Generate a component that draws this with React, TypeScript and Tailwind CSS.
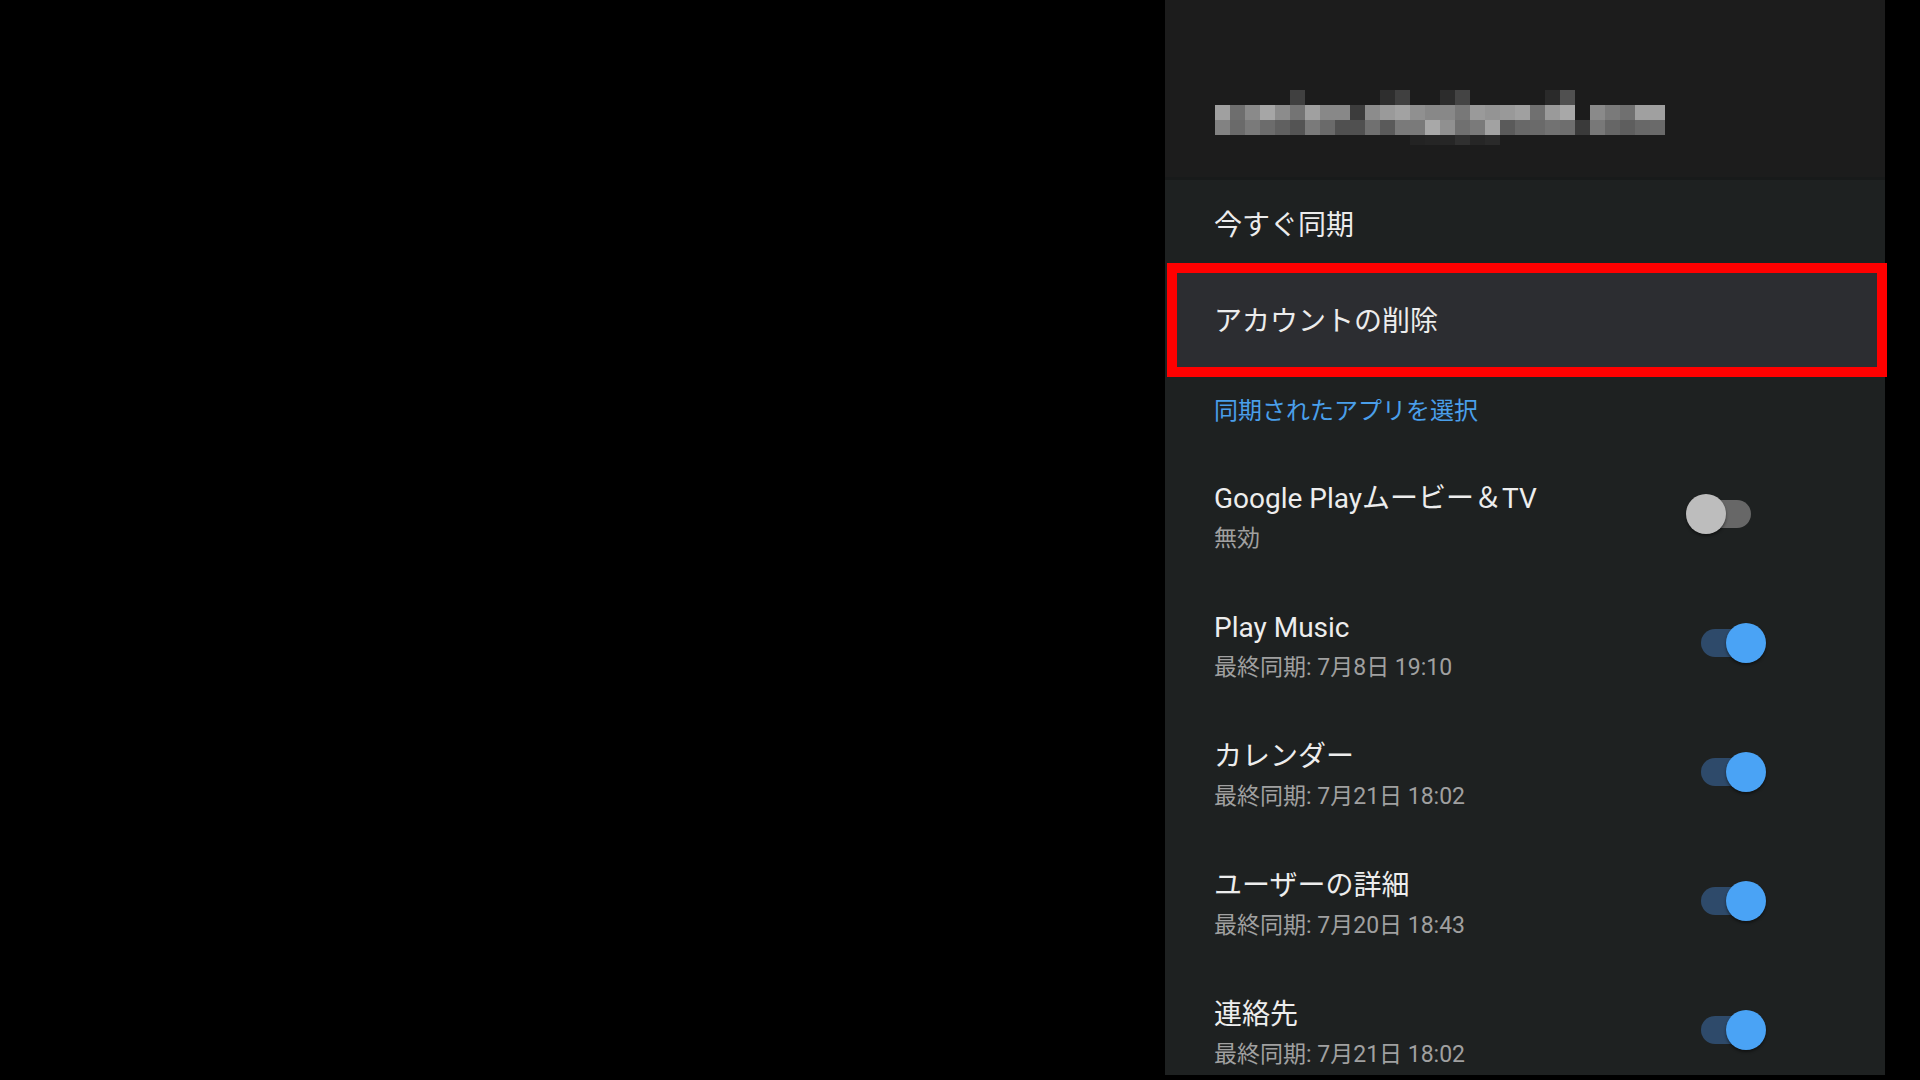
import React from 'react';

// mosaic of the blurred account address
const rowA = ['a0', '6e', '8a', 'a6', '8c', '74', 'a0', '88', '88', '3c', '8c', '9a', 'a2', '90', '88', '88', '78', '9a', '94', '99', 'a0', '70', '9a', 'a8', '1c', '8a', '7a', '70', 'a0', 'a0'];
const rowB = ['82', '6a', '7a', '6c', '60', '54', '7a', '6a', '50', '50', '70', '5a', '7a', '7a', 'a8', '90', '70', '7a', 'a2', '5a', '68', '6a', '72', '6e', '3a', '78', '66', '5e', '68', '6a'];
const topBits: [number, string][] = [[5, '40'], [11, '2e'], [12, '40'], [15, '2c'], [16, '44'], [22, '2a'], [23, '50']];
const bottomBits: [number, string][] = [[13, '23'], [14, '25'], [15, '26'], [16, '30'], [17, '26'], [18, '2a']];

const Mosaic = () => (
  <svg width="450" height="55" viewBox="0 0 450 55" shapeRendering="crispEdges">
    {topBits.map(([i, c]) => (
      <rect key={'t' + i} x={i * 15} y={0} width={15} height={15} fill={`#${c}${c}${c}`} />
    ))}
    {rowA.map((c, i) => (
      <rect key={'a' + i} x={i * 15} y={15} width={15} height={15} fill={`#${c}${c}${c}`} />
    ))}
    {rowB.map((c, i) => (
      <rect key={'b' + i} x={i * 15} y={30} width={15} height={15} fill={`#${c}${c}${c}`} />
    ))}
    {bottomBits.map(([i, c]) => (
      <rect key={'d' + i} x={i * 15} y={45} width={15} height={10} fill={`#${c}${c}${c}`} />
    ))}
  </svg>
);

interface ToggleProps {
  on: boolean;
}

const Toggle: React.FC<ToggleProps> = ({ on }) => (
  <div className="relative w-[80px] h-[40px] shrink-0">
    <div
      className={`absolute left-[15px] top-[6px] w-[50px] h-[28px] rounded-full ${
        on ? 'bg-[#2e4a6a]' : 'bg-[#676767]'
      }`}
    />
    <div
      className={`absolute top-0 w-[40px] h-[40px] rounded-full shadow-[0_2px_3px_rgba(0,0,0,0.45)] ${
        on ? 'left-[40px] bg-[#4aa3f5]' : 'left-0 bg-[#bdbdbd]'
      }`}
    />
  </div>
);

const apps = [
  { name: 'Google Playムービー＆TV', status: '無効', on: false },
  { name: 'Play Music', status: '最終同期: 7月8日 19:10', on: true },
  { name: 'カレンダー', status: '最終同期: 7月21日 18:02', on: true },
  { name: 'ユーザーの詳細', status: '最終同期: 7月20日 18:43', on: true },
  { name: '連絡先', status: '最終同期: 7月21日 18:02', on: true },
];

export default function App() {
  return (
    <div
      className="w-[1920px] h-[1080px] bg-black flex overflow-hidden"
      style={{ fontFamily: 'Roboto, "Noto Sans CJK JP", sans-serif' }}
    >
      <div className="w-[1165px] shrink-0" />
      <div className="w-[720px] h-[1075px] shrink-0 flex flex-col">
        {/* header */}
        <div className="h-[180px] shrink-0 bg-[#1c1c1c] pl-[50px] pt-[90px] border-b-[3px] border-[#181a1a]">
          <Mosaic />
        </div>

        {/* body */}
        <div className="flex-1 min-h-0 bg-[#1e2121] flex flex-col">
          <div className="h-[83px] shrink-0 flex items-center pl-[49px] pt-[9px] text-[28px] text-[#ececec]">
            今すぐ同期
          </div>

          {/* focused item, outlined in red */}
          <div className="h-[114px] w-[720px] ml-[2px] shrink-0 border-[10px] border-[#ff0000] bg-[#2c2d31] flex items-center pl-[37px] pt-[4px] text-[28px] text-[#ececec]">
            アカウントの削除
          </div>

          <div className="h-[72px] shrink-0 flex items-center pl-[49px] pb-[4px] text-[24px] text-[#4a9fea]">
            同期されたアプリを選択
          </div>

          <div className="flex-1 min-h-0 overflow-hidden flex flex-col">
            {apps.map((app) => (
              <div key={app.name} className="h-[129px] shrink-0 flex items-center pl-[49px] pr-[119px]">
                <div className="flex-1 flex flex-col pt-[11px]">
                  <span className="text-[28px] leading-[38px] text-[#ededed]">{app.name}</span>
                  <span className="text-[23px] leading-[38px] mt-[2px] text-[#a0a0a0]">{app.status}</span>
                </div>
                <Toggle on={app.on} />
              </div>
            ))}
          </div>
        </div>
      </div>
    </div>
  );
}
